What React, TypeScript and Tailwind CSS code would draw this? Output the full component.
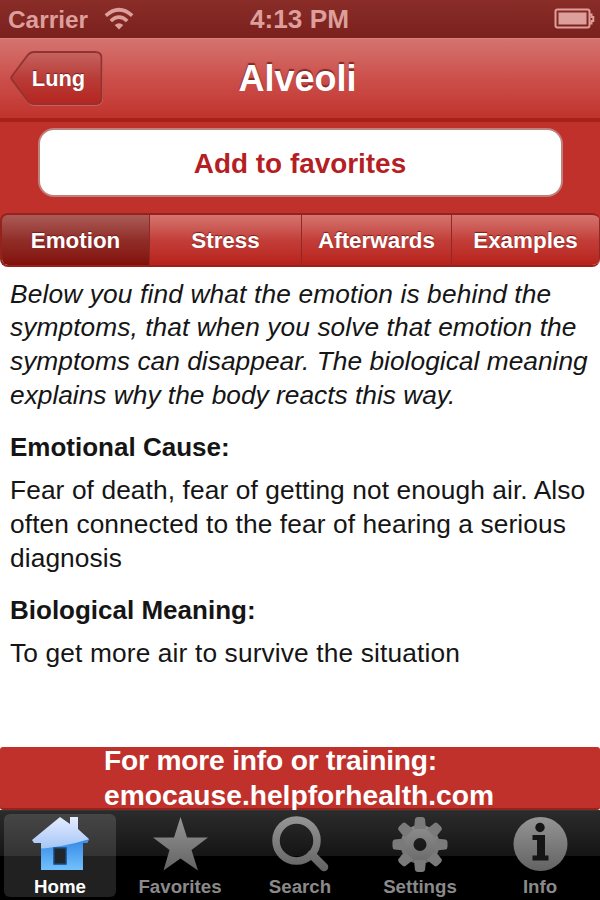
import type { ReactNode } from "react";

function StatusBar() {
  return (
    <div className="relative flex h-[38px] shrink-0 items-center justify-between bg-gradient-to-b from-[#8a2d29] to-[#7a201d] pr-[5px] pl-2 text-[#dd9f9b]">
      <div className="flex items-center gap-4">
        <span className="pt-px text-[24.4px] leading-[38px] font-bold">Carrier</span>
        <svg width="30" height="24" viewBox="0 0 30 24" fill="none" stroke="currentColor" strokeWidth="3.6">
          <path d="M1.8 8.7Q15 -3.2 28.2 8.7" />
          <path d="M6.8 14Q15 6.4 23.2 14" />
          <path d="M15 22.5L10.7 18Q15 14.5 19.3 18Z" fill="currentColor" stroke="none" />
        </svg>
      </div>
      <span className="absolute left-[250px] text-[26.2px] leading-[38px] font-bold">4:13 PM</span>
      <svg className="mb-[2px]" width="41" height="21" viewBox="0 0 41 21" fill="none" stroke="currentColor" strokeWidth="2">
        <rect x="1.5" y="1.5" width="34" height="18" rx="2" />
        <rect x="4.5" y="4.5" width="28" height="12" fill="currentColor" stroke="none" />
        <path d="M36 6.5h1.5v2.5h1.8v4h-1.8v2.5H36" />
      </svg>
    </div>
  );
}

function NavBar() {
  return (
    <div className="relative flex h-[84px] shrink-0 items-center justify-center border-t border-b-4 border-t-[#d8817c] border-b-[#a62119] bg-gradient-to-b from-[#d4736f] via-[#cc4f4b] via-50% to-[#c1322c]">
      <button className="absolute top-[11px] left-[9px] h-[58px] w-[95px]">
        <svg className="absolute inset-0" width="95" height="58" viewBox="0 0 95 58">
          <defs>
            <linearGradient id="back" x1="0" y1="0" x2="0" y2="1">
              <stop offset="0" stopColor="#c66460" />
              <stop offset=".5" stopColor="#b93c38" />
              <stop offset="1" stopColor="#b52520" />
            </linearGradient>
          </defs>
          <path d="M24 3.5Q20 3.5 18 7L3 27Q1.5 29 3 31L18 51Q21 55.5 25 55.5H86Q93.500 55.500 93.500 49V9Q93.500 3.500 86 3.500Z" fill="none" stroke="#de827c" opacity=".5" />
          <path d="M25 2Q21 2 18 6L3 26Q1.500 28 3 30L18 50Q21 54 25 54H86Q92.500 54 92.500 48V8Q92.500 2 86 2Z" fill="url(#back)" stroke="#94322f" strokeWidth="1.8" />
        </svg>
        <span className="relative left-[2px] text-[21.8px] leading-[56px] font-bold text-white [text-shadow:0_-1px_1px_#74211e]">Lung</span>
      </button>
      <h1 className="pt-px pr-[5px] text-[36px] leading-[80px] font-bold text-white [text-shadow:0_-2px_1px_#812a28]">Alveoli</h1>
    </div>
  );
}

const segments = ["Emotion", "Stress", "Afterwards", "Examples"];

function Segments() {
  return (
    <div className="flex h-[54px] shrink-0 overflow-hidden rounded-[8px] border-2 border-r-0 border-[#94231e]">
      {segments.map((label, i) => (
        <button
          key={label}
          className={
            "flex items-center justify-center border-[#8e2a26] pt-px text-[22.4px] font-bold text-white [text-shadow:0_-1px_1px_#74211e] " +
            (i === 0 ? "w-[148px] border-r " : i === 1 ? "w-[152px] border-r " : i === 2 ? "w-[150px] border-r " : "flex-1 border-r ") +
            (i === 0
              ? "bg-gradient-to-b from-[#ab5b57] via-[#912d28] to-[#820f0a]"
              : "bg-gradient-to-b from-[#d47470] via-[#c33e39] to-[#b8201a]")
          }
        >
          {label}
        </button>
      ))}
    </div>
  );
}

function IconDefs() {
  return (
    <svg className="absolute" width="0" height="0">
      <defs>
        <linearGradient id="gray" gradientUnits="userSpaceOnUse" x1="0" y1="2" x2="0" y2="58">
          <stop offset="0" stopColor="#949494" />
          <stop offset="1" stopColor="#606060" />
        </linearGradient>
        <linearGradient id="blue" x1="0" y1="0" x2="0" y2="1">
          <stop offset="0" stopColor="#e6edff" />
          <stop offset="1" stopColor="#76aaf2" />
        </linearGradient>
        <linearGradient id="deep" x1="0" y1="0" x2="0" y2="1">
          <stop offset="0" stopColor="#3589e5" />
          <stop offset="1" stopColor="#75c4ff" />
        </linearGradient>
        <clipPath id="house">
          <path d="M30 1L2 24L4 27H11V54H53V27H57L59 23L48 13V1H40V8Z" />
        </clipPath>
      </defs>
    </svg>
  );
}

const icons: Record<string, ReactNode> = {
  Home: (
    <g>
      <g clipPath="url(#house)">
        <rect width="60" height="56" fill="url(#blue)" />
        <path d="M0 33Q28 33 60 23V56H0Z" fill="url(#deep)" />
      </g>
      <path d="M24 32H36V48H24Z" fill="#222629" stroke="#154b7e" strokeWidth="1.500" />
    </g>
  ),
  Favorites: <path d="M30.500 1L37 21.500H58L41.500 34L48 54.500L30.500 42.500L13.500 54.500L19.500 34L3 21.500H24Z" fill="url(#gray)" />,
  Search: (
    <g fill="none" stroke="url(#gray)">
      <circle cx="26.500" cy="24.500" r="20.500" strokeWidth="7.500" />
      <path d="M41.500 38.500L54 51" strokeWidth="8.500" strokeLinecap="round" />
    </g>
  ),
  Settings: (
    <g>
      <circle cx="30" cy="28.500" r="13" fill="none" stroke="url(#gray)" strokeWidth="13" />
      <g fill="#7a7a7a">
        {[0, 45, 90, 135, 180, 225, 270, 315].map((a) => (
          <path key={a} d="M24 13L25 3Q25.500 1 28 1H32Q34.500 1 35 3L36 13Z" transform={`rotate(${a} 30 28.500)`} />
        ))}
      </g>
    </g>
  ),
  Info: (
    <g>
      <circle cx="30.500" cy="28" r="27" fill="url(#gray)" />
      <circle cx="30" cy="11.500" r="4.700" fill="#151515" />
      <path d="M22.500 19H35V39.500H38.500V44.500H22.500V39.500H27V24H22.500Z" fill="#151515" />
    </g>
  ),
};

function TabBar() {
  return (
    <nav className="relative flex h-[90px] shrink-0 border-t border-[#343434] bg-[linear-gradient(#2b2b2b_0%,#151515_50%,#000_51%,#000_100%)]">
      <IconDefs />
      {Object.keys(icons).map((label) => (
        <button key={label} className="flex flex-1 justify-center">
          <span
            className={
              "mt-[3px] flex h-[83px] w-[112px] flex-col items-center rounded-[6px] pt-[2px] " +
              (label === "Home" ? "bg-white/13 text-white" : "text-[#8a8a8a]")
            }
          >
            <svg className="shrink-0" width="60" height="60" viewBox="0 0 60 60">{icons[label]}</svg>
            <span className="-mt-px text-[18.7px] leading-[24px] font-bold">{label}</span>
          </span>
        </button>
      ))}
    </nav>
  );
}

export default function App() {
  return (
    <div className="flex h-[900px] w-[600px] flex-col overflow-hidden bg-white font-['Liberation_Sans',Arial,sans-serif] text-[#151515]">
      <StatusBar />
      <NavBar />
      <div className="flex h-[91px] shrink-0 justify-center bg-[#c0312c] pt-1.5">
        <button className="h-[69px] w-[525px] rounded-[16px] border-2 border-[#bf817b] bg-white pt-[2px] text-[27.9px] font-bold text-[#b41f25]">
          Add to favorites
        </button>
      </div>
      <div className="bg-[linear-gradient(#c0312c_50%,#fff_50%)]">
        <Segments />
      </div>
      <main className="flex-1 pt-[10.5px] pl-2.5 text-[26.3px] leading-[33.8px] tracking-[0.1px] whitespace-nowrap">
        <p className="tracking-[0.03px] italic">
          <span className="tracking-[0.14px]">Below you find what the emotion is behind the</span><br />
          <span className="tracking-[0.08px]">symptoms, that when you solve that emotion the</span><br />
          symptoms can disappear. The biological meaning<br />
          <span className="tracking-normal">explains why the body reacts this way.</span>
        </p>
        <h2 className="mt-[18px] text-[26px] font-bold tracking-normal">Emotional Cause:</h2>
        <p className="mt-[10px]">
          Fear of death, fear of getting not enough air. Also<br />
          often connected to the fear of hearing a serious<br />
          diagnosis
        </p>
        <h2 className="mt-[18px] text-[26px] font-bold tracking-normal">Biological Meaning:</h2>
        <p className="mt-[9.5px] tracking-[0.14px]">To get more air to survive the situation</p>
      </main>
      <footer className="h-[63px] shrink-0 rounded-[3px] border-b-2 border-[#94231e] bg-[#c0312c] pl-[104px] text-[28.2px] leading-[35px] font-bold text-white">
        <div className="-mt-[4px] tracking-[-0.2px]">For more info or training:</div>
        <div>emocause.helpforhealth.com</div>
      </footer>
      <TabBar />
    </div>
  );
}
